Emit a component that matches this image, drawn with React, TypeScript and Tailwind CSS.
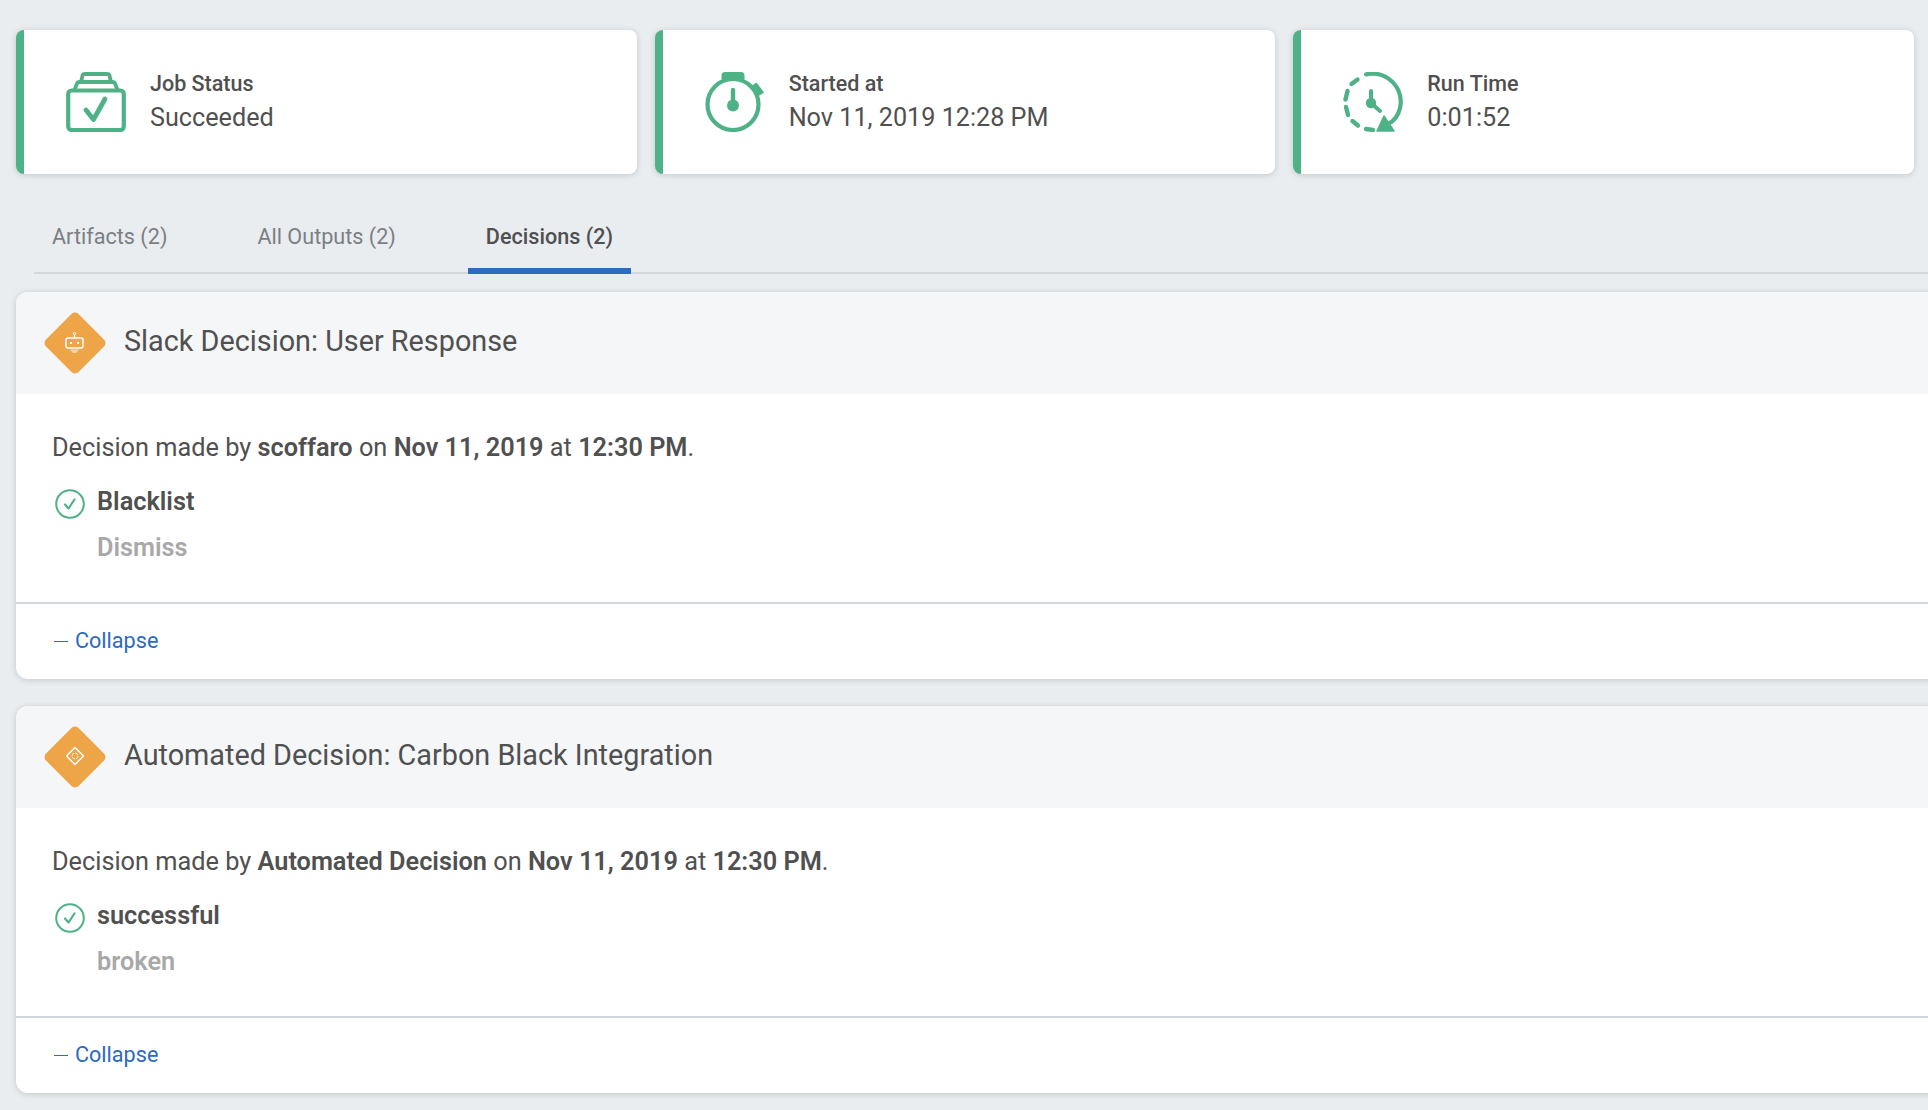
const green = "#4fb286";

function JobIcon() {
  return (
    <svg width="60" height="60" viewBox="0 0 60 60" fill="none">
      <rect x="2.2" y="18.5" width="55.6" height="39.5" rx="3.5" stroke={green} strokeWidth="4.2" />
      <path d="M8.5 18 L11 11.5 Q11.6 10 13.5 10 H46.5 Q48.4 10 49 11.5 L51.5 18" stroke={green} strokeWidth="3.8" />
      <path d="M15 10 L16.5 3.5 Q17 2 19 2 H41 Q43 2 43.5 3.5 L45 10" stroke={green} strokeWidth="3.8" />
      <path d="M20 38 L27.5 47.5 L39 27" stroke={green} strokeWidth="4.8" strokeLinecap="round" strokeLinejoin="round" />
    </svg>
  );
}

function StopwatchIcon() {
  return (
    <svg width="60" height="60" viewBox="0 0 60 60" fill="none">
      <circle cx="28" cy="32.5" r="25.5" stroke={green} strokeWidth="4.2" />
      <path d="M17 7 V3 Q17 0.5 19.5 0.5 H36.5 Q39 0.5 39 3 V7 Z" fill={green} stroke={green} strokeWidth="1" strokeLinejoin="round" />
      <path d="M47 14 L51.5 11 L58.5 20.5 L53.5 23.5 Z" fill={green} stroke={green} strokeWidth="1" strokeLinejoin="round" />
      <path d="M28 18 V33" stroke={green} strokeWidth="4.4" strokeLinecap="round" />
      <circle cx="28" cy="33.5" r="6" fill={green} />
    </svg>
  );
}

function RunTimeIcon() {
  return (
    <svg width="60" height="60" viewBox="0 0 60 60" fill="none">
      <path d="M23 2.4 C27 1 36 1 43 5 C54 11.5 60 23 57 36 C55.5 43 51 49 45 52" stroke={green} strokeWidth="4.2" strokeLinecap="round" />
      <path d="M8.5 12 L14.5 7.5" stroke={green} strokeWidth="4.4" strokeLinecap="round" />
      <path d="M2.5 27.5 L4.5 19" stroke={green} strokeWidth="4.4" strokeLinecap="round" />
      <path d="M3 35 L5 43" stroke={green} strokeWidth="4.4" strokeLinecap="round" />
      <path d="M9.5 49 L15 53.5" stroke={green} strokeWidth="4.4" strokeLinecap="round" />
      <path d="M23 57 L30 58" stroke={green} strokeWidth="4.4" strokeLinecap="round" />
      <path d="M41 44 L51 59 H34 Z" fill={green} stroke={green} strokeWidth="1.5" strokeLinejoin="round" />
      <path d="M28 19 V31 L37 39" stroke={green} strokeWidth="4" strokeLinecap="round" strokeLinejoin="round" />
      <circle cx="28" cy="31" r="5.2" fill={green} />
    </svg>
  );
}

function BotIcon() {
  return (
    <svg width="20" height="22" viewBox="0 0 20 22" fill="none">
      <circle cx="9.5" cy="1.6" r="1.2" stroke="#fff" strokeWidth="1" />
      <path d="M9.5 3 V6" stroke="#fff" strokeWidth="1.2" />
      <rect x="1" y="6" width="17" height="10" rx="2" stroke="#fff" strokeWidth="1.5" />
      <rect x="5" y="10" width="2" height="2" fill="#fff" />
      <rect x="12" y="10" width="2" height="2" fill="#fff" />
      <path d="M5 17.5 H14 L12.5 19.5 H11.5 V21 H7.5 V19.5 H6.5 Z" fill="#fff" fillOpacity="0.55" />
    </svg>
  );
}

function AutoIcon() {
  return (
    <svg width="20" height="20" viewBox="0 0 20 20" fill="none" className="relative -top-[1px]">
      <rect x="4" y="4" width="12" height="12" rx="1" transform="rotate(45 10 10)" stroke="#fff" strokeWidth="1.5" />
      <circle cx="10" cy="10" r="3" stroke="#fff" strokeWidth="1" strokeDasharray="3.4 1.3" />
    </svg>
  );
}

function CheckCircle() {
  return (
    <svg width="30" height="30" viewBox="0 0 30 30" fill="none" className="relative top-[1.5px] shrink-0">
      <circle cx="15" cy="15" r="13.8" stroke={green} strokeWidth="2" />
      <path d="M10 15.5 L13.5 19.5 L19.5 10.5" stroke={green} strokeWidth="2.2" strokeLinecap="round" strokeLinejoin="round" />
    </svg>
  );
}

function StatCard({ icon, label, value }: { icon: React.ReactNode; label: string; value: string }) {
  return (
    <div className="flex h-[144px] items-center rounded-lg border-l-8 border-[#4fb286] bg-white pl-[42px] shadow-[0_1px_6px_rgba(0,0,0,0.16)]">
      <div className="w-[84px] shrink-0">{icon}</div>
      <div className="-mt-[3px]">
        <div className="text-[21.5px] leading-[34px] font-medium text-[#505050]">{label}</div>
        <div className="text-[25.2px] leading-[34px] text-[#505050]">{value}</div>
      </div>
    </div>
  );
}

function DecisionCard({
  icon,
  title,
  by,
  date,
  time,
  choice,
  other,
}: {
  icon: React.ReactNode;
  title: string;
  by: string;
  date: string;
  time: string;
  choice: string;
  other: string;
}) {
  return (
    <div className="w-[1960px] overflow-hidden rounded-xl bg-white shadow-[0_1px_6px_rgba(0,0,0,0.16)]">
      <div className="flex h-[102px] items-center bg-[#f4f6f8] pl-[28px]">
        <div className="relative flex h-[62px] w-[62px] items-center justify-center">
          <div className="absolute h-[46px] w-[46px] rotate-45 rounded-[5px] bg-[#eda548]" />
          <div className="relative flex items-center justify-center">{icon}</div>
        </div>
        <div className="-mt-[3px] ml-[18px] text-[28.8px] text-[#505050]">{title}</div>
      </div>
      <div className="h-[208px] pl-[36px] pt-[34px] text-[25.3px] text-[#505050]">
        <div className="leading-[40px]">
          Decision made by <b className="font-semibold">{by}</b> on <b className="font-semibold">{date}</b> at{" "}
          <b className="font-semibold">{time}</b>.
        </div>
        <div className="mt-[18px] flex items-center pl-[3px]">
          <CheckCircle />
          <div className="ml-[12px] leading-[32px] font-semibold">{choice}</div>
        </div>
        <div className="mt-[14px] pl-[45px] leading-[32px] font-semibold text-[#a8a8a8]">{other}</div>
      </div>
      <div className="flex h-[77px] items-center border-t-2 border-[#d3d7db] pl-[38px] text-[21.6px] text-[#2c6bbd]">
        <span className="mr-[7px] inline-block h-[1.5px] w-[14px] bg-[#2c6bbd]" />
        Collapse
      </div>
    </div>
  );
}

export default function App() {
  return (
    <div className="h-[1110px] w-[1928px] overflow-hidden bg-[#e9edf0] pl-4 pr-[14px] pt-[30px] font-['Roboto',sans-serif]">
      <div className="grid grid-cols-3 gap-[18px]">
        <StatCard icon={<JobIcon />} label="Job Status" value="Succeeded" />
        <StatCard icon={<StopwatchIcon />} label="Started at" value="Nov 11, 2019 12:28 PM" />
        <StatCard icon={<RunTimeIcon />} label="Run Time" value="0:01:52" />
      </div>

      <div className="-mr-[14px] ml-[18px] mt-[32px] flex h-[68px] gap-[54px] border-b-2 border-[#d3d7db] text-[21.6px]">
        <div className="px-[18px] pt-[15px] text-[#7b7f83]">Artifacts (2)</div>
        <div className="px-[18px] pt-[15px] text-[#7b7f83]">All Outputs (2)</div>
        <div className="h-[68px] border-b-[6px] border-[#2c6bbd] px-[18px] pt-[15px] font-medium text-[#505050]">Decisions (2)</div>
      </div>

      <div className="mt-[18px] flex flex-col gap-[27px]">
        <DecisionCard
          icon={<BotIcon />}
          title="Slack Decision: User Response"
          by="scoffaro"
          date="Nov 11, 2019"
          time="12:30 PM"
          choice="Blacklist"
          other="Dismiss"
        />
        <DecisionCard
          icon={<AutoIcon />}
          title="Automated Decision: Carbon Black Integration"
          by="Automated Decision"
          date="Nov 11, 2019"
          time="12:30 PM"
          choice="successful"
          other="broken"
        />
      </div>
    </div>
  );
}
